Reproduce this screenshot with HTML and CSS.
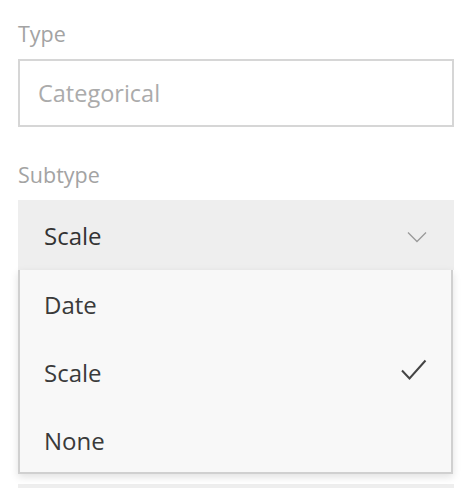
FILE: index.html
```html
<!DOCTYPE html>
<html>
<head>
<meta charset="utf-8">
<link rel="stylesheet" href="styles.css">
</head>
<body>
<div class="form">
  <div class="field">
    <div class="label">Type</div>
    <div class="input">Categorical</div>
  </div>
  <div class="field">
    <div class="label">Subtype</div>
    <div class="select-wrap">
      <div class="select">
        <span>Scale</span>
        <svg class="chev" width="20" height="12" viewBox="0 0 20 12"><path d="M1 1.5 L10 10.5 L19 1.5" fill="none" stroke="#9a9a9a" stroke-width="1.3"/></svg>
      </div>
      <ul class="menu">
        <li class="item">Date</li>
        <li class="item">Scale
          <svg class="check" width="26" height="22" viewBox="0 0 26 22"><path d="M1 11.5 L8.5 19.5 L24.5 1.5" fill="none" stroke="#444" stroke-width="2"/></svg>
        </li>
        <li class="item">None</li>
      </ul>
    </div>
  </div>
  <div class="field next">
    <div class="select"></div>
  </div>
</div>
</body>
</html>
```

FILE: styles.css
```css
* { box-sizing: border-box; }
html, body { overflow: hidden; }
body {
  margin: 0;
  background: #ffffff;
  font-family: "Open Sans", Lato, sans-serif;
}
.form {
  padding: 22px 12px 0 18px;
  display: flex;
  flex-direction: column;
}
.field {
  display: flex;
  flex-direction: column;
}
.field + .field { margin-top: 36px; }
.label {
  font-size: 21.5px;
  line-height: 24px;
  color: #a3a3a3;
  margin-bottom: 13px;
}
.input {
  height: 68px;
  border: 2px solid #d6d6d6;
  padding-left: 18px;
  display: flex;
  align-items: center;
  font-size: 23.5px;
  color: #ababab;
}
.select-wrap { position: relative; }
.select {
  height: 70px;
  background: #eeeeee;
  display: flex;
  align-items: center;
  justify-content: space-between;
  padding: 0 27px 0 26px;
  font-size: 24px;
  color: #333333;
}
.chev { display: block; margin-top: 4px; }
.menu {
  position: absolute;
  top: 100%;
  left: 0;
  right: 1px;
  margin: 0;
  padding: 0;
  list-style: none;
  height: 204px;
  background: #f8f8f8;
  border: 2px solid #d0d0d0;
  border-top: none;
  box-shadow: 0 3px 8px rgba(0,0,0,0.12);
  z-index: 2;
}
.item {
  height: 68px;
  display: flex;
  align-items: center;
  justify-content: space-between;
  padding: 0 24px 0 24px;
  font-size: 24px;
  color: #3a3a3a;
}
.check { display: block; margin-top: -4px; }
.field.next { margin-top: 214px; }
.field.next .select { height: 4px; }
```
